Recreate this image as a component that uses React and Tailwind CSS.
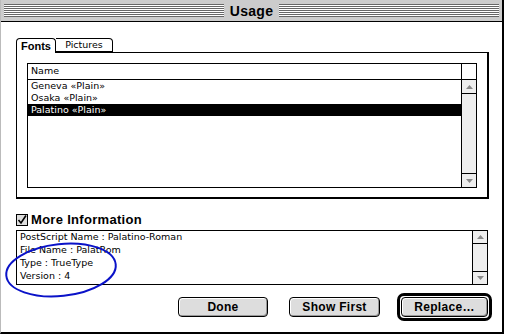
import React from 'react';

const stripes =
  "bg-[repeating-linear-gradient(to_bottom,#666_0px,#666_1px,#fff_1px,#fff_2px)]";

const Arrow = ({ dir }) => (
  <svg width="7" height="4" viewBox="0 0 7 4">
    <path d={dir === 'up' ? 'M3.5 0L7 4H0z' : 'M0 0h7L3.5 4z'} fill="#8a8a8a" />
  </svg>
);

const Button = ({ label, width }) => (
  <div
    className={`${width} h-[20px] rounded-[4px] border border-black bg-[#dddddd] shadow-[inset_1px_1px_0_#fff,inset_-1px_-1px_0_#999] flex items-center justify-center text-[12px] font-bold text-black font-['Liberation_Sans',sans-serif] tracking-[0.3px]`}
  >
    {label}
  </div>
);

const App = () => {
  const fonts = ['Geneva «Plain»', 'Osaka «Plain»', 'Palatino «Plain»'];
  const info = ['PostScript Name : Palatino-Roman', 'File Name : PalatRom', 'Type : TrueType', 'Version : 4'];

  return (
    <div className="w-[505px] h-[335px] bg-white relative overflow-hidden font-['DejaVu_Sans',sans-serif] text-black">
      <div className="w-[504px] h-[334px] border-l border-[#bbb] border-r-2 border-r-black border-b-2 border-b-black bg-white flex flex-col">
        {/* ===== TITLE BAR ===== */}
        <div className="h-[22px] shrink-0 bg-[#cccccc] border-b border-black flex items-center px-[3px]">
          <div className={`flex-1 h-[13px] ${stripes}`} />
          <div className="px-[6px] text-[14px] font-bold leading-none font-['Liberation_Sans',sans-serif] tracking-[0.3px]">Usage</div>
          <div className={`flex-1 h-[13px] ${stripes}`} />
        </div>

        {/* ===== BODY ===== */}
        <div className="pl-[15px] flex flex-col">
          {/* tabs */}
          <div className="mt-[15px] flex items-end h-[15px]">
            <div className="w-[40px] h-[15px] border border-black border-b-0 rounded-t-[4px] bg-white flex items-center justify-center text-[11px] font-bold relative z-10 -mb-[1px] font-['Liberation_Sans',sans-serif]">
              Fonts
            </div>
            <div className="w-[57px] h-[14px] border border-black border-l-0 rounded-tr-[4px] flex items-center justify-center text-[9.5px]">
              Pictures
            </div>
          </div>

          {/* tab panel */}
          <div className="w-[473px] h-[147px] border border-black border-r-2 border-b-2 pl-[10px] pt-[10px]">
            <div className="w-[450px] h-[125px] border border-black flex">
              <div className="flex-1 flex flex-col">
                <div className="h-[16px] border-b border-black pl-[3px] flex items-center text-[9.5px]">Name</div>
                {fonts.map((f, i) => (
                  <div
                    key={f}
                    className={`h-[12px] pl-[3px] flex items-center text-[9.5px] ${i === 2 ? 'bg-black text-white' : ''}`}
                  >
                    {f}
                  </div>
                ))}
              </div>
              <div className="w-[15px] border-l border-black flex flex-col bg-[#eeeeee]">
                <div className="h-[16px] border-b border-black bg-white" />
                <div className="h-[14px] border-b border-black flex items-center justify-center">
                  <Arrow dir="up" />
                </div>
                <div className="flex-1" />
                <div className="h-[14px] border-t border-black flex items-center justify-center">
                  <Arrow dir="down" />
                </div>
              </div>
            </div>
          </div>

          {/* more information */}
          <div className="mt-[14px] flex items-center h-[13px] gap-[3px]">
            <svg width="12" height="12" viewBox="0 0 12 12">
              <rect x="0.5" y="0.5" width="11" height="11" fill="#dddddd" stroke="#000" />
              <path d="M2.5 6l2.5 3L10 1.5" fill="none" stroke="#000" strokeWidth="1.6" />
            </svg>
            <span className="text-[13px] font-bold leading-none font-['Liberation_Sans',sans-serif] tracking-[0.3px]">More Information</span>
          </div>

          {/* info box */}
          <div className="mt-[4px] w-[472px] h-[55px] border border-black flex">
            <div className="flex-1 pl-[3px] flex flex-col">
              {info.map((t) => (
                <div key={t} className="h-[13px] flex items-center text-[9.5px] whitespace-pre">
                  {t}
                </div>
              ))}
            </div>
            <div className="w-[15px] border-l border-black flex flex-col bg-[#eeeeee]">
              <div className="h-[13px] border-b border-black flex items-center justify-center">
                <Arrow dir="up" />
              </div>
              <div className="flex-1" />
              <div className="h-[13px] border-t border-black flex items-center justify-center">
                <Arrow dir="down" />
              </div>
            </div>
          </div>

          {/* buttons */}
          <div className="mt-[8px] flex items-center pl-[162px] h-[28px]">
            <Button label="Done" width="w-[90px]" />
            <div className="ml-[21px]">
              <Button label="Show First" width="w-[91px]" />
            </div>
            <div className="ml-[17px] w-[95px] h-[28px] rounded-[7px] border-[3px] border-black p-[1px] flex items-center justify-center">
              <Button label="Replace…" width="w-[87px]" />
            </div>
          </div>
        </div>
      </div>

      {/* hand-drawn annotation */}
      <svg className="absolute left-0 top-0 pointer-events-none" width="505" height="335">
        <ellipse
          cx="61"
          cy="270"
          rx="55"
          ry="26"
          transform="rotate(-6 61 270)"
          fill="none"
          stroke="#0a12c8"
          strokeWidth="2"
        />
      </svg>
    </div>
  );
};

export default App;
